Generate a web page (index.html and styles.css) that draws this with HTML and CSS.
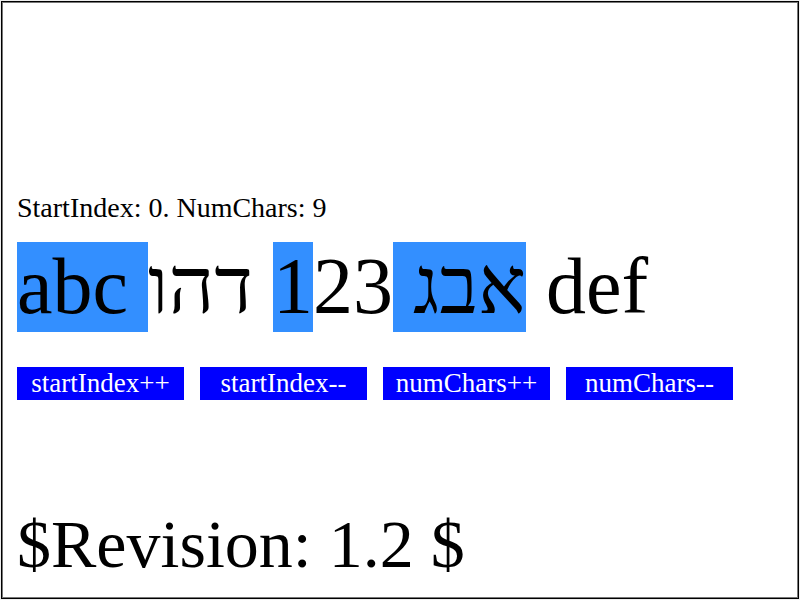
FILE: index.html
```html
<!DOCTYPE html>
<html lang="en">
<head>
<meta charset="utf-8">
<title>Text selection</title>
<link rel="stylesheet" href="styles.css">
</head>
<body>
<main class="frame">
  <p class="status">StartIndex: 0. NumChars: 9</p>
  <p class="sample"><mark>abc אבג 1</mark>23 דהו def</p>
  <div class="actions">
    <button type="button">startIndex++</button>
    <button type="button">startIndex--</button>
    <button type="button">numChars++</button>
    <button type="button">numChars--</button>
  </div>
  <p class="revision">$Revision: 1.2 $</p>
</main>
</body>
</html>
```
FILE: styles.css
```css
* {
  box-sizing: border-box;
}

body {
  margin: 0;
  padding: 1px;
  background: #fff;
  color: #000;
  font-family: "Liberation Serif", serif;
}

.frame {
  display: flex;
  flex-direction: column;
  justify-content: flex-end;
  min-height: calc(100vh - 2px);
  padding: 15px 15px 16px;
  border: 1px solid #000;
  box-shadow: inset 0 0 0 1px #777, 0 0 0 1px #eee;
}

p {
  margin: 0;
}

.status {
  margin-bottom: 18px;
  font-size: 28px;
  line-height: 30px;
}

.sample {
  margin-bottom: 36px;
  font-size: 80px;
  line-height: 90px;
  white-space: nowrap;
}

.sample mark {
  padding-bottom: 2px;
  background: #338fff;
  color: inherit;
}

.actions {
  display: flex;
  gap: 16px;
  margin-bottom: 106px;
}

.actions button {
  width: 167px;
  height: 33px;
  padding: 0;
  border: 0;
  background: #00f;
  color: #fff;
  font: 27px/33px "Liberation Serif", serif;
}

.revision {
  font-size: 68px;
  line-height: 76px;
}
```
